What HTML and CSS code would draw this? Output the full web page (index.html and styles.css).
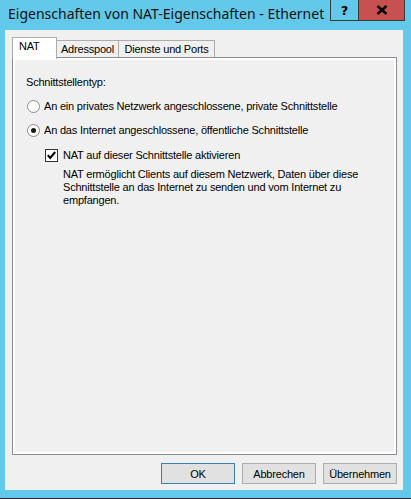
FILE: index.html
```html
<!DOCTYPE html>
<html lang="de">
<head>
    <meta charset="UTF-8">
    <meta name="viewport" content="width=device-width, initial-scale=1.0">
    <title>Eigenschaften von NAT-Eigenschaften - Ethernet</title>
    <link rel="stylesheet" href="styles.css">
</head>
<body>
    <div class="window">
        <div class="titlebar">
            <div class="title">Eigenschaften von NAT-Eigenschaften - Ethernet</div>
            <div class="caption-buttons">
                <div class="cap-btn help">?</div>
                <div class="cap-btn close">
                    <svg width="12" height="10" viewBox="0 0 12 10">
                        <path d="M1.5 1 L10.5 9 M10.5 1 L1.5 9" stroke="#000" stroke-width="2.4" fill="none"/>
                    </svg>
                </div>
            </div>
        </div>

        <div class="client">
            <!-- Tabs -->
            <div class="tabs">
                <div class="tab active">NAT</div>
                <div class="tab tab-pool">Adresspool</div>
                <div class="tab tab-ports">Dienste und Ports</div>
            </div>

            <div class="panel">
                <div class="panel-inner">
                    <div class="group-label">Schnittstellentyp:</div>

                    <div class="option">
                        <span class="radio"></span>
                        <span>An ein privates Netzwerk angeschlossene, private Schnittstelle</span>
                    </div>
                    <div class="option option-second">
                        <span class="radio checked"></span>
                        <span>An das Internet angeschlossene, öffentliche Schnittstelle</span>
                    </div>

                    <div class="check-row">
                        <span class="checkbox">
                            <svg width="11" height="11" viewBox="0 0 11 11">
                                <path d="M1.8 5.2 L4.2 8 L9.2 2" stroke="#000" stroke-width="2" fill="none"/>
                            </svg>
                        </span>
                        <span>NAT auf dieser Schnittstelle aktivieren</span>
                    </div>
                    <div class="description">
                        NAT ermöglicht Clients auf diesem Netzwerk, Daten über diese<br>
                        Schnittstelle an das Internet zu senden und vom Internet zu<br>
                        empfangen.
                    </div>
                </div>
            </div>

            <!-- Dialog buttons -->
            <div class="buttons">
                <button class="btn default">OK</button>
                <button class="btn">Abbrechen</button>
                <button class="btn">Übernehmen</button>
            </div>
        </div>
    </div>
</body>
</html>
```

FILE: styles.css
```css
body {
    margin: 0;
    background-color: #2d2d2d;
    font-family: "Liberation Sans", Arial, sans-serif;
    font-size: 11px;
    letter-spacing: -0.2px;
    color: #000;
}
.window {
    width: 411px;
    height: 498px;
    box-sizing: border-box;
    background-color: #63c9ea;
    padding: 0 8px 8px 5px;
    display: flex;
    flex-direction: column;
}
.titlebar {
    height: 30px;
    display: flex;
    align-items: flex-start;
    margin-right: -2px;
}
.title {
    flex: 1;
    padding: 4px 0 0 3px;
    font-family: "Noto Sans", "Open Sans", sans-serif;
    font-size: 14px;
    letter-spacing: 0;
    color: #111;
    white-space: nowrap;
    overflow: hidden;
}
.caption-buttons {
    display: flex;
    border: 1px solid #3a3a3a;
    border-top: none;
}
.cap-btn {
    height: 20px;
    display: flex;
    align-items: center;
    justify-content: center;
}
.help {
    width: 27px;
    border-right: 1px solid #3a3a3a;
    font-family: "DejaVu Sans", sans-serif;
    font-weight: bold;
    font-size: 13px;
}
.close {
    width: 45px;
    background-color: #c75050;
}
.client {
    flex: 1;
    background-color: #f0f0f0;
    padding: 7px 6px 6px 7px;
    display: flex;
    flex-direction: column;
}
.tabs {
    height: 20px;
    display: flex;
    align-items: flex-end;
    position: relative;
    z-index: 1;
}
.tab {
    box-sizing: border-box;
    height: 17px;
    border: 1px solid #acacac;
    border-bottom: none;
    background-color: #f0f0f0;
    padding-top: 2px;
    line-height: 13px;
    text-align: center;
    margin-left: -1px;
}
.tab.active {
    width: 45px;
    height: 22px;
    margin-left: 0;
    margin-bottom: -2px;
    padding-left: 6px;
    text-align: left;
    background-color: #fff;
    position: relative;
    z-index: 2;
}
.tab-pool {
    width: 63px;
}
.tab-ports {
    width: 97px;
}
.panel {
    flex: 1;
    border: 1px solid #8d8e93;
    background-color: #fff;
    padding: 2px;
}
.panel-inner {
    height: 100%;
    box-sizing: border-box;
    background-color: #f0f0f0;
    padding: 16px 11px 0 11px;
    line-height: 13px;
}
.option {
    display: flex;
    align-items: flex-start;
    gap: 4px;
    margin-top: 11px;
    margin-left: 1px;
}
.radio {
    width: 13px;
    height: 13px;
    box-sizing: border-box;
    border: 1px solid #8a8a8a;
    border-radius: 50%;
    background-color: #fff;
    display: flex;
    align-items: center;
    justify-content: center;
}
.radio.checked::after {
    content: "";
    width: 5px;
    height: 5px;
    border-radius: 50%;
    background-color: #1a1a1a;
}
.check-row {
    display: flex;
    align-items: flex-start;
    gap: 5px;
    margin-top: 12px;
    margin-left: 19px;
}
.checkbox {
    width: 13px;
    height: 13px;
    box-sizing: border-box;
    border: 1px solid #333;
    background-color: #fff;
    display: flex;
    align-items: center;
    justify-content: center;
}
.description {
    margin-top: 6px;
    margin-left: 37px;
}
.buttons {
    display: flex;
    justify-content: flex-end;
    gap: 7px;
    margin-top: 8px;
}
.btn {
    width: 74px;
    height: 21px;
    padding: 0;
    border: 1px solid #adadad;
    background-color: #e1e1e1;
    font-family: "Liberation Sans", Arial, sans-serif;
    font-size: 11px;
    letter-spacing: -0.2px;
    color: #000;
}
.btn.default {
    border-color: #3c7fb1;
}
```
